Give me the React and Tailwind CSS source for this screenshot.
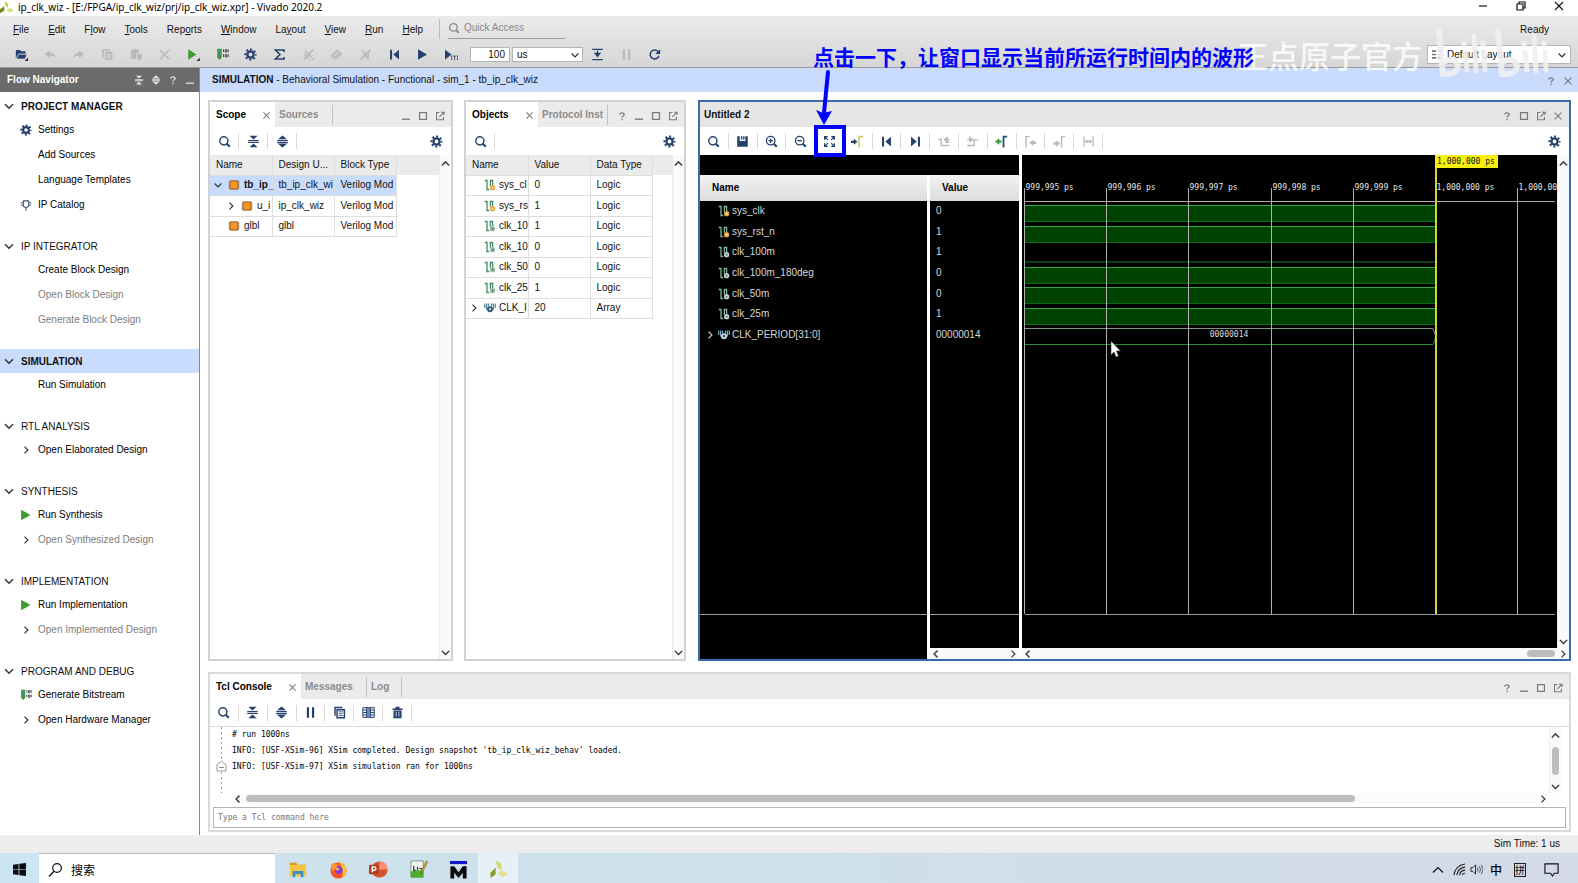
import React, { useState } from 'react';
import clsx from 'clsx';

const SANS = "font-['Liberation_Sans',sans-serif]";
const MONO = "font-['DejaVu_Sans_Mono',monospace]";

const NAV = [
  {
    title: 'PROJECT MANAGER',
    bold: true,
    items: [
      { name: 'Settings', icon: 'gear' },
      { name: 'Add Sources' },
      { name: 'Language Templates' },
      { name: 'IP Catalog', icon: 'ip' },
    ],
  },
  {
    title: 'IP INTEGRATOR',
    items: [
      { name: 'Create Block Design' },
      { name: 'Open Block Design', off: true },
      { name: 'Generate Block Design', off: true },
    ],
  },
  { title: 'SIMULATION', bold: true, active: true, items: [{ name: 'Run Simulation' }] },
  { title: 'RTL ANALYSIS', items: [{ name: 'Open Elaborated Design', icon: 'right' }] },
  {
    title: 'SYNTHESIS',
    items: [
      { name: 'Run Synthesis', icon: 'playGreen' },
      { name: 'Open Synthesized Design', icon: 'right', off: true },
    ],
  },
  {
    title: 'IMPLEMENTATION',
    items: [
      { name: 'Run Implementation', icon: 'playGreen' },
      { name: 'Open Implemented Design', icon: 'right', off: true },
    ],
  },
  {
    title: 'PROGRAM AND DEBUG',
    items: [
      { name: 'Generate Bitstream', icon: 'bits' },
      { name: 'Open Hardware Manager', icon: 'right' },
    ],
  },
];

// [before, mnemonic, after]
const MENUS = [
  ['', 'F', 'ile'],
  ['', 'E', 'dit'],
  ['F', 'l', 'ow'],
  ['', 'T', 'ools'],
  ['Rep', 'o', 'rts'],
  ['', 'W', 'indow'],
  ['La', 'y', 'out'],
  ['', 'V', 'iew'],
  ['', 'R', 'un'],
  ['', 'H', 'elp'],
];

const MAIN_TOOLS = [
  ['open', 'Open'],
  ['undo', 'Undo', true],
  ['redo', 'Redo', true],
  ['copy', 'Copy', true],
  ['paste', 'Paste', true],
  ['close', 'Delete', true],
  ['runMenu', 'Run'],
  ['bits', 'Generate Bitstream'],
  ['gear', 'Settings'],
  ['sigma', 'Report'],
  ['slashA', 'Unmark', true],
  ['slashB', 'Edit probes', true],
  ['slashC', 'Clear', true],
  ['first', 'Restart'],
  ['play', 'Run All'],
  ['playT', 'Run For'],
];

const WAVE_TOOLS = [
  ['search', 'Find'],
  ['save', 'Save'],
  ['zoomIn', 'Zoom In'],
  ['zoomOut', 'Zoom Out'],
  ['fit', 'Zoom Fit'],
  ['toCursor', 'Go to Cursor'],
  ['first', 'Go to Time 0'],
  ['last', 'Go to Last Time'],
  ['prevEdge', 'Previous Transition', true],
  ['nextEdge', 'Next Transition', true],
  ['addMarker', 'Add Marker'],
  ['prevMarker', 'Previous Marker', true],
  ['nextMarker', 'Next Marker', true],
  ['swap', 'Swap Cursors', true],
];

// short is what fits in the narrow Objects column
const SIGNALS = [
  { name: 'sys_clk', short: 'sys_cl', value: '0', input: true },
  { name: 'sys_rst_n', short: 'sys_rs', value: '1', input: true },
  { name: 'clk_100m', short: 'clk_10', value: '1' },
  { name: 'clk_100m_180deg', short: 'clk_10', value: '0' },
  { name: 'clk_50m', short: 'clk_50', value: '0' },
  { name: 'clk_25m', short: 'clk_25', value: '1' },
  { name: 'CLK_PERIOD[31:0]', short: 'CLK_I', value: '00000014', bus: true },
];

const TICKS = ['999,995 ps', '999,996 ps', '999,997 ps', '999,998 ps', '999,999 ps', '1,000,000 ps', '1,000,00'];

const GLYPHS = {
  gear: (
    <g fill="none" stroke="currentColor">
      <circle cx="8" cy="8" r="3.8" strokeWidth="2.8" />
      <circle cx="8" cy="8" r="6.2" strokeWidth="2.6" strokeDasharray="2.43 2.43" strokeDashoffset="1.2" />
    </g>
  ),
  ip: (
    <g fill="none" stroke="#3d5578" strokeWidth="1.400">
      <path d="M4.500 2.500h7v7l-2 1.500h-3l-2-1.500zM1 5h3M1 8h3M12 5h3M12 8h3M8 11v4.500" />
    </g>
  ),
  right: <path d="M6 3.500l4.500 4.500L6 12.500" fill="none" stroke="#333" strokeWidth="1.600" />,
  down: <path d="M3.500 6L8 10.500 12.500 6" fill="none" stroke="#333" strokeWidth="1.700" />,
  up: <path d="M3.500 10.500L8 6l4.500 4.500" fill="none" stroke="#444" strokeWidth="1.900" />,
  left: <path d="M10 3.500L5.500 8l4.500 4.500" fill="none" stroke="#444" strokeWidth="2" />,
  playGreen: <path d="M1.500 1l12.500 7-12.500 7z" fill="#3a9e2c" />,
  runMenu: (
    <g>
      <path d="M1.500 1.500l10 6.500-10 6.500z" fill="#3a9e2c" />
      <path d="M15.800 12v4h-4z" fill="#222" />
    </g>
  ),
  bits: (
    <g>
      <path d="M1.500 1h5.500v11l-2.700 2.500L1.500 12z" fill="#3f9454" />
      <g fill="none" stroke="#444" strokeWidth="1.200">
        <path d="M9.200 1.500v3.500M9.200 7.500v3.500M15 1.500v3.500M15 7.500v3.500" />
        <path d="M11.300 2.100h2v2.900h-2zM11.300 8.100h2v2.900h-2z" />
      </g>
    </g>
  ),
  open: (
    <g>
      <path d="M1 13V2.500h5l1.500 1.500H13v3H4.500z" fill="#26406e" />
      <path d="M4.500 7.700H14.500L12.500 13.500H1.500z" fill="#26406e" stroke="#e2e2e2" strokeWidth=".7" />
      <path d="M16 12v4h-4z" fill="#222" />
    </g>
  ),
  undo: <path d="M1 7.500L7.500 3v3c4 0 6.500 2 7 6.500-1.500-2.500-3.500-3-7-3v3z" fill="currentColor" />,
  redo: <path d="M15 7.500L8.500 3v3c-4 0-6.500 2-7 6.500 1.500-2.500 3.500-3 7-3v3z" fill="currentColor" />,
  copy: (
    <g fill="none" stroke="currentColor">
      <path d="M2.500 12V2.500h9" strokeWidth="2" />
      <path d="M5.500 5h8v9.500h-8z" fill="currentColor" />
      <path d="M7 8h5M7 10h5M7 12h5" stroke="#ececec" strokeWidth=".8" />
    </g>
  ),
  paste: (
    <g>
      <path d="M1 2.500h10v11H1z" fill="currentColor" />
      <path d="M4 1h4v2.500H4z" fill="currentColor" />
      <path d="M8 6.500h7v8.500H8z" fill="currentColor" stroke="#e0e0e0" />
    </g>
  ),
  close: <path d="M2.500 2.500l11 11M13.500 2.500l-11 11" stroke="currentColor" strokeWidth="1.800" />,
  sigma: <path d="M13.500 5V2.500H3l5.500 5.500L3 13.500h10.500V11" fill="none" stroke="currentColor" strokeWidth="2" />,
  slashA: (
    <g stroke="currentColor" fill="none">
      <path d="M2 14L14 2" strokeWidth="2" />
      <path d="M4 3.500l7.500 7.500M3 7.500l5.500 5.500M11.500 13.500H15" strokeWidth="2" />
    </g>
  ),
  slashB: <path d="M2 10l7-7 2.500 2.500-7 7zM6.500 14L14.500 6" fill="none" stroke="currentColor" strokeWidth="2" />,
  slashC: <path d="M2 14L14 2M4 3l5 6M6 8l6 5.500M11.500 6v6" fill="none" stroke="currentColor" strokeWidth="2" />,
  first: <path d="M2.500 2h2.500v12H2.500zM13.500 2v12L6.500 8z" fill="currentColor" />,
  last: <path d="M11 2h2.500v12H11zM2.500 2v12l7-6z" fill="currentColor" />,
  play: <path d="M2.500 1.500l11 6.500-11 6.500z" fill="currentColor" />,
  playT: (
    <g>
      <path d="M0 2l8 6-8 6z" fill="currentColor" />
      <path d="M8.500 9q-1.500 3 0 6M15 9q1.500 3 0 6M9.800 10h4M11.800 10v5" fill="none" stroke="currentColor" />
    </g>
  ),
  stepTo: (
    <path d="M1.500 1.800h13M1.500 14.200h13M8 3v4M5 6.500h6L8 10.500z" fill="currentColor" stroke="currentColor" strokeWidth="1.500" />
  ),
  pause: <path d="M3.500 1.500H6.200v13H3.500zM9.800 1.500h2.700v13H9.800z" fill="currentColor" />,
  reload: (
    <g>
      <path d="M12.500 4.500a5.500 5.500 0 1 0 1 5" fill="none" stroke="currentColor" strokeWidth="1.900" />
      <path d="M15 1.500V7.500H9z" fill="currentColor" />
    </g>
  ),
  search: (
    <g fill="none" stroke="currentColor">
      <circle cx="7.200" cy="7.200" r="5" strokeWidth="1.800" />
      <path d="M10.800 10.800l3.700 3.700" strokeWidth="2.500" />
    </g>
  ),
  zoomIn: (
    <g fill="none" stroke="currentColor">
      <circle cx="7" cy="7" r="5.200" strokeWidth="1.600" />
      <path d="M10.800 10.800l3.700 3.700" strokeWidth="2.500" />
      <path d="M4.300 7h5.400M7 4.300v5.400" strokeWidth="1.500" />
    </g>
  ),
  zoomOut: (
    <g fill="none" stroke="currentColor">
      <circle cx="7" cy="7" r="5.200" strokeWidth="1.600" />
      <path d="M10.800 10.800l3.700 3.700" strokeWidth="2.500" />
      <path d="M4.300 7h5.400" strokeWidth="1.700" />
    </g>
  ),
  save: <path d="M1.500 1.500h3v6h7v-6h3v13h-13zM6 1.500h1.800v4H6zM8.800 1.500h1.700v4H8.800z" fill="currentColor" />,
  fit: (
    <path
      d="M2 5.800V2h3.800M2 2l4 4M10.200 2H14v3.800M14 2l-4 4M2 10.200V14h3.800M2 14l4-4M14 10.200V14h-3.800M14 14l-4-4"
      fill="none"
      stroke="currentColor"
      strokeWidth="1.500"
    />
  ),
  toCursor: (
    <g>
      <path d="M0 7h3.500V4.500L8 8.300 3.500 12V9.700H0z" fill="currentColor" />
      <path d="M10 15.500V2h5" fill="none" stroke="#d8c850" strokeWidth="2" />
    </g>
  ),
  prevEdge: <path d="M.500 5.500H4v7.500h10M14 5.500H9M11 3L8 5.500 11 8zM9 9h5" fill="none" stroke="currentColor" strokeWidth="1.800" />,
  nextEdge: <path d="M1.500 5.500H6M5 3l3 2.500L5 8zM1.500 13H10V6h5" fill="none" stroke="currentColor" strokeWidth="1.800" />,
  addMarker: (
    <g fill="none" strokeWidth="2.200">
      <path d="M.500 8H8M4.200 4.500v7" stroke="#2f9a3c" />
      <path d="M10.500 15.500V2H15" stroke="#26506e" />
    </g>
  ),
  prevMarker: (
    <g>
      <path d="M2.500 15.500V2H7" fill="none" stroke="currentColor" strokeWidth="1.800" />
      <path d="M15 8h-3.500V5.500L6.500 9.500l5 4V11H15z" fill="currentColor" />
    </g>
  ),
  nextMarker: (
    <g>
      <path d="M10.500 15.500V2H15" fill="none" stroke="currentColor" strokeWidth="1.800" />
      <path d="M.500 9H4V6.500L8.500 10.500 4 14.500V12H.500z" fill="currentColor" />
    </g>
  ),
  swap: <path d="M2.500 1.500v13M13.500 1.500v13M4.500 8h7M6.500 6l-2 2 2 2M9.500 6l2 2-2 2" fill="none" stroke="currentColor" strokeWidth="1.600" />,
  collapse: <path d="M3 1h10L8 5.500zM3 15h10L8 10.500zM1.500 6.200h13v1.400h-13zM1.500 8.500h13v1.400h-13z" fill="currentColor" />,
  expand: <path d="M8 .5l5.500 4.700h-11zM8 15.500l5.500-4.700h-11zM1.500 6.100h13v1.500h-13zM1.500 8.500h13v1.500h-13z" fill="currentColor" />,
  list: (
    <g>
      <path d="M2.500 12V1.800h9" fill="none" stroke="currentColor" strokeWidth="1.800" />
      <path d="M5 4.500h9v10H5z" fill="none" stroke="currentColor" strokeWidth="1.800" />
      <path d="M7 7.200h5M7 9.500h5M7 11.800h5" stroke="currentColor" />
    </g>
  ),
  columns: (
    <g>
      <path d="M1 2h14v12H1zM1 5h14M1 8h14M1 11h14M5.500 1.500v13M10.500 1.500v13" fill="none" stroke="currentColor" strokeWidth="1.200" />
      <path d="M6 2.500h4v11H6z" fill="#6f87b8" />
    </g>
  ),
  trash: (
    <g>
      <path d="M1.800 3h12.400v1.800H1.800zM5.500 1h5v2h-5zM3 5.500h10V15H3z" fill="currentColor" />
      <path d="M6.300 7v6M9.700 7v6" stroke="#c5cede" strokeWidth="1.200" />
    </g>
  ),
  help: <path d="M4.500 5.500C4.500 2 11.500 2 11.500 5.500 11.500 7.800 8 7.500 8 10.500M8 12.500v2.200" fill="none" stroke="currentColor" strokeWidth="2.100" />,
  min: <path d="M1.500 12h13v2.200h-13z" fill="currentColor" />,
  max: <path d="M2.500 2.500h11v11h-11z" fill="none" stroke="currentColor" strokeWidth="2" />,
  float: <path d="M7 2.500H2.500v11.500h11V9M7 9.500L13.500 3M9.500 2h5v4.500" fill="none" stroke="currentColor" strokeWidth="1.700" />,
  chip: (
    <g>
      <path d="M2.500 2.500h11v11h-11z" fill="#f7941d" stroke="#7a5a30" strokeWidth="1.200" />
      <path d="M1 5h1.500M1 8h1.500M1 11h1.500M13.500 5H15M13.500 8H15M13.500 11H15" stroke="#7a5a30" strokeWidth="1.200" />
    </g>
  ),
};

function Icon({ name, size = 'size-4', className }) {
  return (
    <svg viewBox="0 0 16 16" className={clsx(size, 'shrink-0', className)} aria-hidden="true">
      {GLYPHS[name]}
    </svg>
  );
}

function SignalIcon({ input, bus, dark }) {
  const line = dark ? '#7fb59a' : '#3f8a63';
  if (bus) {
    return (
      <svg viewBox="0 0 16 16" className="size-3 shrink-0" aria-hidden="true">
        <path d="M1 2v6M3.500 2v8M6 2v4M10 2v4M12.500 2v8M15 2v6" stroke={dark ? '#7fb0c8' : '#4f7f98'} strokeWidth="1.600" />
        <circle cx="8" cy="9.500" r="4" fill={dark ? '#c5d6e2' : '#35587a'} />
        <circle cx="8" cy="9.500" r="1.400" fill={dark ? '#234' : '#dde'} />
      </svg>
    );
  }
  return (
    <svg viewBox="0 0 16 16" className="size-3 shrink-0" aria-hidden="true">
      <path d="M1 2h3v12h3M8.500 9V2h3v6" fill="none" stroke={line} strokeWidth="1.700" />
      <circle cx="11.500" cy="11.500" r="3.500" fill={input ? '#e8a63a' : dark ? '#c9d2cc' : '#9fb8a8'} />
      <circle cx="11.500" cy="11.500" r="1.200" fill={input ? '#fff2cc' : '#47705a'} />
    </svg>
  );
}

function ToolButton({ icon, label, off, divider, className, children }) {
  return (
    <button
      type="button"
      aria-label={label}
      title={label}
      disabled={off}
      className={clsx(
        'relative flex h-4 flex-1 items-center justify-center',
        divider && 'border-r border-[#d9d9d9]',
        off ? 'text-[#b9b9b9]' : 'text-[#26406e]',
        className,
      )}
    >
      <Icon name={icon} size="size-[13px]" />
      {children}
    </button>
  );
}

function WindowButtons({ names }) {
  return (
    <div className="ml-auto flex items-center gap-1 pt-0.5 text-[#7a7a7a]">
      {names.map((name) => (
        <button key={name} type="button" aria-label={name} className="flex h-3 w-[13px] items-center justify-center">
          <Icon name={name} size="size-[10px]" />
        </button>
      ))}
    </div>
  );
}

function ActiveTab({ children, className }) {
  return (
    <div className={clsx('flex h-full items-center justify-between bg-white pr-1 pl-1.5 font-bold text-black', className)}>
      <button type="button" className="font-bold">{children}</button>
      <button type="button" aria-label="close tab" className="pt-0.5 text-[#777]">
        <Icon name="close" size="size-[9px]" />
      </button>
    </div>
  );
}

function IdleTab({ children, className }) {
  return (
    <button
      type="button"
      className={clsx('h-5 border-r border-[#c4c4c4] pl-1 text-left font-bold whitespace-nowrap text-[#8c8c8c]', className)}
    >
      {children}
    </button>
  );
}

function VScroll({ className, thumb }) {
  return (
    <div className={clsx('flex w-3 shrink-0 flex-col items-center justify-between border-l border-[#ececec] bg-[#fafafa] pt-0.5', className)}>
      <Icon name="up" size="size-[13px]" />
      {thumb && <div className="h-7 w-[7px] rounded-full bg-[#bdbdbd]" />}
      <Icon name="down" size="size-[13px]" />
    </div>
  );
}

function TitleBar() {
  return (
    <header className="flex h-4 shrink-0 items-center bg-white text-black">
      <svg viewBox="0 0 16 16" className="size-[14px] shrink-0" aria-hidden="true">
        <path d="M6 0l3 3v5L6 5z" fill="#c3cf3f" />
        <path d="M0 9l5-3v5l-5 3z" fill="#7d8a1f" />
        <path d="M7 10l5-2 4 3-5 2z" fill="#d9de7a" />
      </svg>
      <h1 className="pb-0.5 pl-1 font-['Noto_Sans',sans-serif] text-[10px] leading-3">
        ip_clk_wiz - [E:/FPGA/ip_clk_wiz/prj/ip_clk_wiz.xpr] - Vivado 2020.2
      </h1>
      <div className="ml-auto flex items-center gap-[26px] pr-[13px] pb-1">
        <button type="button" aria-label="Minimize">
          <svg viewBox="0 0 12 12" className="size-3"><path d="M2 6h8" stroke="#111" strokeWidth="1.200" /></svg>
        </button>
        <button type="button" aria-label="Restore">
          <svg viewBox="0 0 12 12" className="size-3">
            <path d="M2 4h6v6H2zM4 4V2h6v6H8" fill="none" stroke="#111" strokeWidth="1.200" />
          </svg>
        </button>
        <button type="button" aria-label="Close">
          <svg viewBox="0 0 12 12" className="size-3"><path d="M2 2l8 8M10 2l-8 8" stroke="#111" strokeWidth="1.100" /></svg>
        </button>
      </div>
    </header>
  );
}

function MenuAndToolbar() {
  const [runTime, setRunTime] = useState('100');

  return (
    <div className="shrink-0 border-b border-[#9a9a9a] bg-linear-to-b from-[#ebebeb] to-[#d6d6d6]">
      <div className="flex h-[26px] items-center pr-[29px] pl-[13px]">
        <nav className="flex gap-[19px] pt-px">
          {MENUS.map(([before, key, after]) => (
            <button key={before + key + after} type="button">
              {before}
              <span className="underline underline-offset-1">{key}</span>
              {after}
            </button>
          ))}
        </nav>
        <div className="ml-4 h-5 border-l border-[#bdbdbd]" />
        <label className="ml-2 flex h-5 w-[117px] items-center border-b border-[#9a9a9a] pb-0.5 text-[#8a8a8a]">
          <Icon name="search" size="size-3" />
          <input
            type="text"
            aria-label="Quick Access"
            placeholder="Quick Access"
            className="ml-1 w-full bg-transparent outline-none placeholder:text-[#8a8a8a]"
          />
        </label>
        <span className="ml-auto pt-px">Ready</span>
      </div>
      <div className="flex h-[25px] items-center pr-[7px] pl-[7px]">
        <div className="flex w-[459px]">
          {MAIN_TOOLS.map(([icon, label, off]) => (
            <ToolButton key={label} icon={icon} label={label} off={off} />
          ))}
        </div>
        <input
          type="text"
          aria-label="Run time"
          value={runTime}
          onChange={(e) => setRunTime(e.target.value)}
          className="ml-1 h-[15px] w-10 border border-[#b5b5b5] bg-white pr-1 text-right outline-none"
        />
        <div className="relative ml-0.5">
          <select aria-label="Time unit" className="h-[15px] w-[71px] appearance-none border border-[#b5b5b5] bg-white pl-1 outline-none">
            <option>us</option>
            <option>ns</option>
            <option>ps</option>
          </select>
          <Icon name="down" size="size-3" className="pointer-events-none absolute top-0.5 right-0.5" />
        </div>
        <div className="flex w-[86px]">
          <ToolButton icon="stepTo" label="Step" />
          <ToolButton icon="pause" label="Break" off />
          <ToolButton icon="reload" label="Relaunch" />
        </div>
        <div className="relative ml-auto">
          <select aria-label="Layout" className="h-[19px] w-36 appearance-none border border-[#b5b5b5] bg-white pl-[19px] outline-none">
            <option>Default Layout</option>
          </select>
          <svg viewBox="0 0 12 10" className="pointer-events-none absolute top-[5px] left-[5px] h-[9px] w-[10px]">
            <path d="M0 0h5v2H0zM0 4h5v2H0zM0 8h5v2H0zM7 0h5v2H7zM7 4h5v2H7zM7 8h5v2H7z" fill="#777" />
          </svg>
          <Icon name="down" size="size-3" className="pointer-events-none absolute top-1 right-[3px]" />
        </div>
      </div>
    </div>
  );
}

function FlowNavigator() {
  return (
    <aside className="flex w-50 shrink-0 flex-col border-r border-[#8a8a8a] bg-white">
      <div className="flex h-6 shrink-0 items-center justify-between bg-[#6b6b6b] pr-px pl-[7px] text-white">
        <h2 className="font-bold">Flow Navigator</h2>
        <div className="flex text-[#dedede]">
          {['collapse', 'expand', 'help', 'min'].map((name) => (
            <button key={name} type="button" aria-label={name} className="flex w-[17px] justify-center">
              <Icon name={name} size="size-[10px]" />
            </button>
          ))}
        </div>
      </div>
      <div className="pt-0.5">
        {NAV.map((section) => (
          <section key={section.title} className="mb-[17px]">
            <button
              type="button"
              className={clsx(
                'flex h-6 w-full items-center gap-[5px] pt-px pl-0.5 text-left text-[#111]',
                section.bold && 'font-bold',
                section.active && 'bg-[#c9dcfe]',
              )}
            >
              <Icon name="down" size="size-[14px]" className="-translate-y-px" />
              {section.title}
            </button>
            <div className="-mt-px">
              {section.items.map((item) => (
                <button
                  key={item.name}
                  type="button"
                  className={clsx(
                    'flex h-[25px] w-full items-center pl-5 text-left',
                    item.off ? 'text-[#7d7d7d]' : 'text-black',
                  )}
                >
                  <span className="mr-1.5 flex w-3 justify-center text-[#26406e]">
                    {item.icon && <Icon name={item.icon} size="size-3" />}
                  </span>
                  {item.name}
                </button>
              ))}
            </div>
          </section>
        ))}
      </div>
    </aside>
  );
}

const CELL = 'border-r border-b border-[#dedede] p-0 pl-1.5 text-left font-normal whitespace-nowrap';

function DataTable({ heads, children, className }) {
  return (
    <table className={clsx('w-full table-fixed border-collapse', className)}>
      <thead>
        <tr className="h-5 bg-[#ebebeb]">
          {heads.map((head) => (
            <th key={head} className={clsx(CELL, 'w-[62px]')}>{head}</th>
          ))}
          <th className="p-0" aria-hidden="true" />
        </tr>
      </thead>
      <tbody>{children}</tbody>
    </table>
  );
}

function ScopePanel() {
  return (
    <section className="flex w-[245px] shrink-0 flex-col border-2 border-[#d2d2d2] bg-white">
      <div className="flex h-[25px] shrink-0 items-center bg-[#ebebeb] pr-[5px]">
        <ActiveTab className="w-[65px]">Scope</ActiveTab>
        <IdleTab className="w-[58px]">Sources</IdleTab>
        <WindowButtons names={['min', 'max', 'float']} />
      </div>
      <div className="flex h-7 shrink-0 items-center pr-2">
        <div className="flex w-[87px]">
          <ToolButton icon="search" label="Find" divider />
          <ToolButton icon="collapse" label="Collapse All" divider />
          <ToolButton icon="expand" label="Expand All" divider />
        </div>
        <button type="button" aria-label="Scope settings" className="ml-auto text-[#26406e]">
          <Icon name="gear" size="size-[13px]" />
        </button>
      </div>
      <div className="flex min-h-0 flex-1">
        <div className="flex-1">
          <DataTable className="h-[82px]" heads={['Name', 'Design U...', 'Block Type']}>
            <tr>
              <td className={clsx(CELL, 'bg-[#c9dcfe]')}>
                <span className="-ml-1 flex items-center font-bold">
                  <Icon name="down" size="size-3" className="mr-1" />
                  <Icon name="chip" size="size-3" className="mr-1" />
                  tb_ip_
                </span>
              </td>
              <td className={clsx(CELL, 'bg-[#c9dcfe]')}>tb_ip_clk_wi</td>
              <td className={clsx(CELL, 'bg-[#c9dcfe]')}>Verilog Mod</td>
            </tr>
            <tr>
              <td className={CELL}>
                <span className="flex items-center pl-[9px]">
                  <Icon name="right" size="size-3" className="mr-1" />
                  <Icon name="chip" size="size-3" className="mr-1" />
                  u_i
                </span>
              </td>
              <td className={CELL}>ip_clk_wiz</td>
              <td className={CELL}>Verilog Mod</td>
            </tr>
            <tr>
              <td className={CELL}>
                <span className="flex items-center pl-3">
                  <Icon name="chip" size="size-3" className="mr-1" />
                  glbl
                </span>
              </td>
              <td className={CELL}>glbl</td>
              <td className={CELL}>Verilog Mod</td>
            </tr>
          </DataTable>
        </div>
        <VScroll />
      </div>
    </section>
  );
}

function ObjectsPanel() {
  return (
    <section className="ml-[11px] flex w-[222px] shrink-0 flex-col border-2 border-[#d2d2d2] bg-white">
      <div className="flex h-[25px] shrink-0 items-center bg-[#ebebeb] pr-[5px]">
        <ActiveTab className="w-[72px]">Objects</ActiveTab>
        <IdleTab className="w-[70px]">Protocol Inst</IdleTab>
        <WindowButtons names={['help', 'min', 'max', 'float']} />
      </div>
      <div className="flex h-7 shrink-0 items-center pr-2">
        <div className="flex w-[29px]">
          <ToolButton icon="search" label="Find" divider />
        </div>
        <button type="button" aria-label="Objects settings" className="ml-auto text-[#26406e]">
          <Icon name="gear" size="size-[13px]" />
        </button>
      </div>
      <div className="flex min-h-0 flex-1">
        <div className="flex-1">
          <DataTable className="h-[164px]" heads={['Name', 'Value', 'Data Type']}>
            {SIGNALS.map((s) => (
              <tr key={s.name}>
                <td className={CELL}>
                  <span className="-ml-1 flex items-center">
                    <span className="mr-1 w-3 shrink-0">{s.bus && <Icon name="right" size="size-3" />}</span>
                    <SignalIcon {...s} />
                    <span className="pl-[3px]">{s.short}</span>
                  </span>
                </td>
                <td className={CELL}>{s.bus ? '20' : s.value}</td>
                <td className={CELL}>{s.bus ? 'Array' : 'Logic'}</td>
              </tr>
            ))}
          </DataTable>
        </div>
        <VScroll />
      </div>
    </section>
  );
}

function Waveform() {
  const top = (row) => 50 + Math.round(row * 20.5);
  const end = 413;

  return (
    <svg className={clsx('h-[493px] w-full bg-black text-[8px]', MONO)} aria-label="Waveform">
      {SIGNALS.map((s, row) => {
        const y = top(row);
        if (s.bus) {
          return (
            <g key={s.name} fill="none">
              <path d={`M3 ${y + 0.5}H${end - 2}l3 8`} stroke="#7f9a80" />
              <path d={`M3 ${y + 16.5}H${end - 2}l3-8`} stroke="#2a8a35" />
              <text x="207" y={y + 9} textAnchor="middle" fill="#dcdcdc">{s.value}</text>
            </g>
          );
        }
        if (s.name === 'clk_100m') {
          return <path key={s.name} d={`M3 ${y + 16}H${end}`} stroke="#1f7a2a" />;
        }
        return (
          <g key={s.name}>
            <rect x="3" y={y} width={end - 3} height="17" fill="#004200" />
            <path d={`M3 ${y + 0.5}H${end}`} stroke="#35a544" />
            <path d={`M3 ${y + 16.5}H${end}`} stroke="#0c6a18" />
          </g>
        );
      })}
      <line x1="3" x2="99.6%" y1="46.500" y2="46.500" stroke="#b3a9ac" />
      <line x1="3" x2="99.6%" y1="459.500" y2="459.500" stroke="#9c9c9c" />
      {TICKS.map((label, i) => {
        const x = Math.round(2 + i * 82.2) + 0.5;
        return (
          <g key={i}>
            <line x1={x} x2={x} y1="33" y2="459" stroke="#b0b0b0" />
            <text x={x + 1} y="35" fill="#e4e4e4">{label}</text>
          </g>
        );
      })}
      <rect x="413" width="2" height="459" fill="#d6d245" />
      <rect x="413" width="63" height="13" fill="#f8ee10" />
      <text x="415" y="9" fill="#111">1,000,000 ps</text>
    </svg>
  );
}

function HScroll({ children, className }) {
  return (
    <div className={clsx('flex h-[11px] shrink-0 items-center justify-between bg-[#fafafa]', className)}>
      <Icon name="left" size="size-3" />
      {children}
      <Icon name="right" size="size-3" />
    </div>
  );
}

const WAVE_HEAD = 'flex h-[26px] shrink-0 items-center bg-linear-to-b from-[#f2f2f2] to-[#dcdcdc] font-bold text-black';

function WavePanel() {
  return (
    <section className="ml-3 flex min-w-0 flex-1 flex-col border-2 border-[#3b6aad] bg-white">
      <div className="flex h-[25px] shrink-0 items-center bg-[#e5e5e5] pr-[5px] pl-1">
        <h2 className="font-bold">Untitled 2</h2>
        <WindowButtons names={['help', 'max', 'float', 'close']} />
      </div>
      <div className="flex h-7 shrink-0 items-center pr-2">
        <div className="flex w-[403px]">
          {WAVE_TOOLS.map(([icon, label, off]) => (
            <ToolButton key={label} icon={icon} label={label} off={off} divider>
              {icon === 'fit' && <span className="absolute -top-2 -left-px size-8 border-4 border-[#0000ff]" />}
            </ToolButton>
          ))}
        </div>
        <button type="button" aria-label="Wave settings" className="ml-auto text-[#26406e]">
          <Icon name="gear" size="size-[13px]" />
        </button>
      </div>
      <div className="flex min-h-0 flex-1">
        <div className="flex w-[319px] shrink-0 flex-col bg-black">
          <div className="h-5 shrink-0" />
          <div className="flex min-h-0 flex-1 text-[#d8d8d8]">
            <div className="flex w-[227px] flex-col">
              <div className={clsx(WAVE_HEAD, 'pl-3')}>Name</div>
              <ul className="flex h-[144px] flex-col">
                {SIGNALS.map((s) => (
                  <li key={s.name} className="flex flex-1 items-center pl-1">
                    <span className="mr-0.5 w-3">{s.bus && <Icon name="right" size="size-3" className="invert" />}</span>
                    <SignalIcon {...s} dark />
                    <span className="pl-0.5">{s.name}</span>
                  </li>
                ))}
              </ul>
              <div className="h-[270px] shrink-0 border-b border-[#9c9c9c]" />
            </div>
            <div className="flex flex-1 flex-col border-l-3 border-white">
              <div className={clsx(WAVE_HEAD, 'pl-3')}>Value</div>
              <ul className="flex h-[144px] flex-col">
                {SIGNALS.map((s) => (
                  <li key={s.name} className="flex flex-1 items-center pl-1.5">{s.value}</li>
                ))}
              </ul>
              <div className="h-[270px] shrink-0 border-b border-[#9c9c9c]" />
              <HScroll className="mt-auto" />
            </div>
          </div>
        </div>
        <div className="flex min-w-0 flex-1 flex-col border-l-3 border-white bg-black">
          <div className="flex min-h-0 flex-1">
            <div className="min-w-0 flex-1 overflow-hidden">
              <Waveform />
            </div>
            <VScroll />
          </div>
          <HScroll>
            <div className="mr-0.5 ml-auto h-[7px] w-7 rounded-full bg-[#bdbdbd]" />
          </HScroll>
        </div>
      </div>
    </section>
  );
}

function TclConsole() {
  return (
    <section className="mt-[11px] flex h-40 shrink-0 flex-col border-2 border-[#d6dadb] bg-white">
      <div className="flex h-[25px] shrink-0 items-center bg-[#ebebeb] pr-[5px]">
        <ActiveTab className="w-[91px]">Tcl Console</ActiveTab>
        <IdleTab className="w-[66px]">Messages</IdleTab>
        <IdleTab className="w-[35px]">Log</IdleTab>
        <WindowButtons names={['help', 'min', 'max', 'float']} />
      </div>
      <div className="flex h-7 shrink-0 items-center border-b border-[#dadada]">
        <div className="flex w-[202px]">
          {['search', 'collapse', 'expand', 'pause', 'list', 'columns', 'trash'].map((name) => (
            <ToolButton key={name} icon={name} label={name} divider />
          ))}
        </div>
      </div>
      <div className="flex min-h-0 flex-1 pr-2">
        <div className="flex w-[22px] shrink-0 justify-center">
          <svg viewBox="0 0 22 66" className="h-[66px] w-[22px]" aria-hidden="true">
            <path d="M11.500 0v66" stroke="#999" strokeDasharray="2 3" />
            <path d="M7 38l4.500-4 4.500 4v6H7z" fill="#fff" stroke="#999" />
            <path d="M9 40.500h5" stroke="#888" />
          </svg>
        </div>
        <div className="flex min-w-0 flex-1 flex-col">
          <div className={clsx('min-h-0 flex-1 text-[8px] leading-4 text-black', MONO)}>
            <p># run 1000ns</p>
            <p>INFO: [USF-XSim-96] XSim completed. Design snapshot 'tb_ip_clk_wiz_behav' loaded.</p>
            <p>INFO: [USF-XSim-97] XSim simulation ran for 1000ns</p>
          </div>
          <HScroll>
            <div className="mx-0.5 flex-1">
              <div className="h-[7px] w-[86%] rounded-full bg-[#bdbdbd]" />
            </div>
          </HScroll>
        </div>
        <VScroll thumb className="mb-[11px]" />
      </div>
      <input
        type="text"
        aria-label="Tcl command"
        placeholder="Type a Tcl command here"
        className={clsx('mx-[3px] mt-[3px] mb-0.5 h-[21px] shrink-0 border border-[#b3b3b3] bg-white px-1 text-[8px] outline-none placeholder:text-[#777]', MONO)}
      />
    </section>
  );
}

const APP_BUTTON = 'flex w-10 items-center justify-center pt-[3px]';

function Taskbar() {
  return (
    <footer className="flex h-[30px] shrink-0 bg-linear-to-r from-[#cde3ed] via-[#cde0ec] to-[#d4dae7] text-black">
      <button type="button" aria-label="Start" className="flex w-[39px] items-center justify-center bg-[#cbe6f1] pt-0.5">
        <svg viewBox="0 0 14 14" className="size-[13px]">
          <path d="M0 2l6-1v5.600H0zM6.800.9L14 0v6.600H6.800zM0 7.400h6V13l-6-1zM6.800 7.400H14V14l-7.200-.9z" fill="#0b0b12" />
        </svg>
      </button>
      <label className="flex w-[236px] items-center border-t border-[#b9b9b9] bg-white pt-0.5 pl-2">
        <svg viewBox="0 0 16 16" className="size-4">
          <circle cx="10" cy="6" r="4.300" fill="none" stroke="#111" strokeWidth="1.200" />
          <path d="M7 9.200L2 14.500" stroke="#111" strokeWidth="1.300" />
        </svg>
        <input
          type="text"
          aria-label="搜索"
          placeholder="搜索"
          className="ml-2 w-40 bg-transparent font-['Noto_Sans_CJK_SC',sans-serif] text-xs outline-none placeholder:text-black"
        />
      </label>
      <div className="ml-[3px] flex">
        <button type="button" aria-label="Explorer" className={APP_BUTTON}>
          <svg viewBox="0 0 20 20" className="size-[18px]">
            <path d="M1 2h7l2 2h9v13H1z" fill="#f6c445" />
            <path d="M1 2h7l1.500 2.500H1z" fill="#d99b20" />
            <path d="M4 18v-7h12v7h-3v-3.500H7V18z" fill="#3f8fc9" />
          </svg>
        </button>
        <button type="button" aria-label="Firefox" className={APP_BUTTON}>
          <svg viewBox="0 0 20 20" className="size-[19px]">
            <circle cx="10" cy="11" r="8.500" fill="#f5562a" />
            <path d="M10 1c4 2 8.500 4.500 8.500 10-.5 4-3 6.500-5 7.500C16 13 14 7 10 1z" fill="#fdc12e" />
            <path d="M2 5l3-2 2 2h3L4 12z" fill="#ff9a2a" />
            <circle cx="10.300" cy="10.500" r="4" fill="#7a3fe0" />
            <path d="M6 9c2-2 4-.5 5 .5l-2 2z" fill="#ffb347" />
          </svg>
        </button>
        <button type="button" aria-label="PowerPoint" className={APP_BUTTON}>
          <svg viewBox="0 0 20 20" className="size-[19px]">
            <circle cx="11" cy="10" r="8.500" fill="#d35230" />
            <path d="M11 1.500A8.500 8.500 0 0 1 19.500 10H11z" fill="#ff8f6b" />
            <rect x="0" y="5" width="10" height="10" rx="1" fill="#b83b1d" />
            <path d="M3.500 13V7.200h2a1.700 1.700 0 0 1 0 3.600h-2" fill="none" stroke="#fff" strokeWidth="1.500" />
          </svg>
        </button>
        <button type="button" aria-label="Editor" className={APP_BUTTON}>
          <svg viewBox="0 0 20 20" className="size-[19px]">
            <path d="M2 1h13v17H2z" fill="#f3f5ee" stroke="#7d8f86" />
            <path d="M2 12c5-2 9 0 13-2v8.500H2z" fill="#4caf2a" />
            <path d="M5 6v5h2M9 7v4M11 9h3" stroke="#333" strokeWidth="1.300" fill="none" />
            <path d="M18 1l2 1-6 11-2 1z" fill="#e0b030" stroke="#6b5b1c" strokeWidth=".6" />
          </svg>
        </button>
        <button type="button" aria-label="ModelSim" className={APP_BUTTON}>
          <svg viewBox="0 0 20 20" className="size-[19px]">
            <path d="M1 1h18v3.500H1z" fill="#1414c8" />
            <path d="M1.500 19.500V6.500h4L10 13l4.500-6.500h4v13h-4v-6L10 19l-4.500-5.500v6z" fill="#0a0a0a" />
            <path d="M1 5.300h18" stroke="#e8eef2" />
          </svg>
        </button>
        <button type="button" aria-label="Vivado" className={clsx(APP_BUTTON, 'bg-[#e6f1f7]')}>
          <svg viewBox="0 0 20 20" className="size-[19px]">
            <path d="M7 0l6 4v7l-4-3z" fill="#d3da66" />
            <path d="M1 14l6-6v7l-5 4z" fill="#8d9a2b" />
            <path d="M9 14l5-3 6 4-6 3z" fill="#e0e38c" />
          </svg>
        </button>
      </div>
      <div className="ml-auto flex items-center pt-[3px] pr-[19px]">
        <svg viewBox="0 0 12 12" className="mr-[9px] size-3"><path d="M1 8.500l5-5 5 5" fill="none" stroke="#111" strokeWidth="1.200" /></svg>
        <svg viewBox="0 0 14 14" className="mr-1 size-[13px]">
          <path d="M1 13C2 6 6 2 13 1M4 13c1-5 4-8 9-8.500M7 13c.5-3 3-5 6-5.300M10 13c.3-1.500 1.500-2 3-2" fill="none" stroke="#222" strokeWidth="1.200" />
        </svg>
        <svg viewBox="0 0 14 14" className="mr-[7px] size-[13px]">
          <path d="M1 5h2l3-3v10L3 9H1z" fill="none" stroke="#222" />
          <path d="M8 5q1.500 2 0 4M10 3.500q3 3.500 0 7M12 2q4 5 0 10" fill="none" stroke="#444" />
        </svg>
        <span className="mr-3 font-['Noto_Sans_CJK_SC',sans-serif] text-xs leading-4 font-medium">中</span>
        <span className="mr-[18px] border border-[#222] font-['Noto_Sans_CJK_SC',sans-serif] text-[10px] leading-3">拼</span>
        <svg viewBox="0 0 16 16" className="size-[15px]">
          <path d="M1 2h14v10h-4l-2 3-2-3H1z" fill="none" stroke="#111" strokeWidth="1.200" />
        </svg>
      </div>
    </footer>
  );
}

// Tutorial callout, channel watermark and mouse pointer that float over the window
function Overlay() {
  return (
    <div className="pointer-events-none absolute inset-0 overflow-hidden font-['Noto_Sans_CJK_SC',sans-serif]">
      <p className="absolute top-[35px] left-[1237px] text-[31px] leading-10 font-medium whitespace-nowrap text-white/80">正点原子官方</p>
      <svg viewBox="0 0 116 52" className="absolute top-7 left-[1436px] h-[52px] w-[116px]" aria-hidden="true">
        <g fill="none" stroke="#efefef" strokeOpacity=".9" strokeLinecap="round">
          <path d="M3 3l4 43c12 1 17-5 14-11-2-4-8-4-12-2" strokeWidth="6" />
          <path d="M29 24l2 18M38 8l2 35M48 24l1 18" strokeWidth="5" />
          <path d="M28 15v2M47 15v2" strokeWidth="5" />
          <path d="M62 3l4 43c12 1 17-5 14-11-2-4-8-4-12-2" strokeWidth="6" />
          <path d="M89 24l2 18M98 8l2 35M109 24l1 18" strokeWidth="5" />
          <path d="M88 15v2M108 15v2" strokeWidth="5" />
        </g>
      </svg>
      <p className="absolute top-[41px] left-[813px] text-[21px] leading-[30px] font-bold whitespace-nowrap text-[#0000ff]">
        点击一下，让窗口显示当前所运行时间内的波形
      </p>
      <svg viewBox="0 0 20 58" className="absolute top-[69px] left-[815px] h-[58px] w-5" aria-hidden="true">
        <path d="M13 3L9 44" stroke="#0000ff" strokeWidth="4" strokeLinecap="round" />
        <path d="M1 41l7 3 9-2-8 14z" fill="#0000ff" />
      </svg>
      <svg viewBox="0 0 12 18" className="absolute top-[341px] left-[1110px] h-[18px] w-3" aria-hidden="true">
        <path d="M1 0v14l3-3 2 5 2.500-1-2-5h4z" fill="#fff" stroke="#333" strokeWidth=".6" />
      </svg>
    </div>
  );
}

export default function App() {
  return (
    <div className={clsx('relative flex h-screen flex-col overflow-hidden bg-white text-[10px] leading-[14px] text-[#111]', SANS)}>
      <TitleBar />
      <MenuAndToolbar />
      <div className="flex min-h-0 flex-1">
        <FlowNavigator />
        <main className="flex min-w-0 flex-1 flex-col">
          <div className="flex h-6 shrink-0 items-center bg-[#c9dcfe] pr-1 pl-3">
            <h2>
              <strong>SIMULATION</strong> - Behavioral Simulation - Functional - sim_1 - tb_ip_clk_wiz
            </h2>
            <WindowButtons names={['help', 'close']} />
          </div>
          <div className="flex min-h-0 flex-1 flex-col pt-2 pr-[7px] pb-[3px] pl-2">
            <div className="flex min-h-0 flex-1">
              <ScopePanel />
              <ObjectsPanel />
              <WavePanel />
            </div>
            <TclConsole />
          </div>
        </main>
      </div>
      <div className="flex h-[18px] shrink-0 items-center justify-end bg-[#ededed] pr-[18px]">Sim Time: 1 us</div>
      <Taskbar />
      <Overlay />
    </div>
  );
}
